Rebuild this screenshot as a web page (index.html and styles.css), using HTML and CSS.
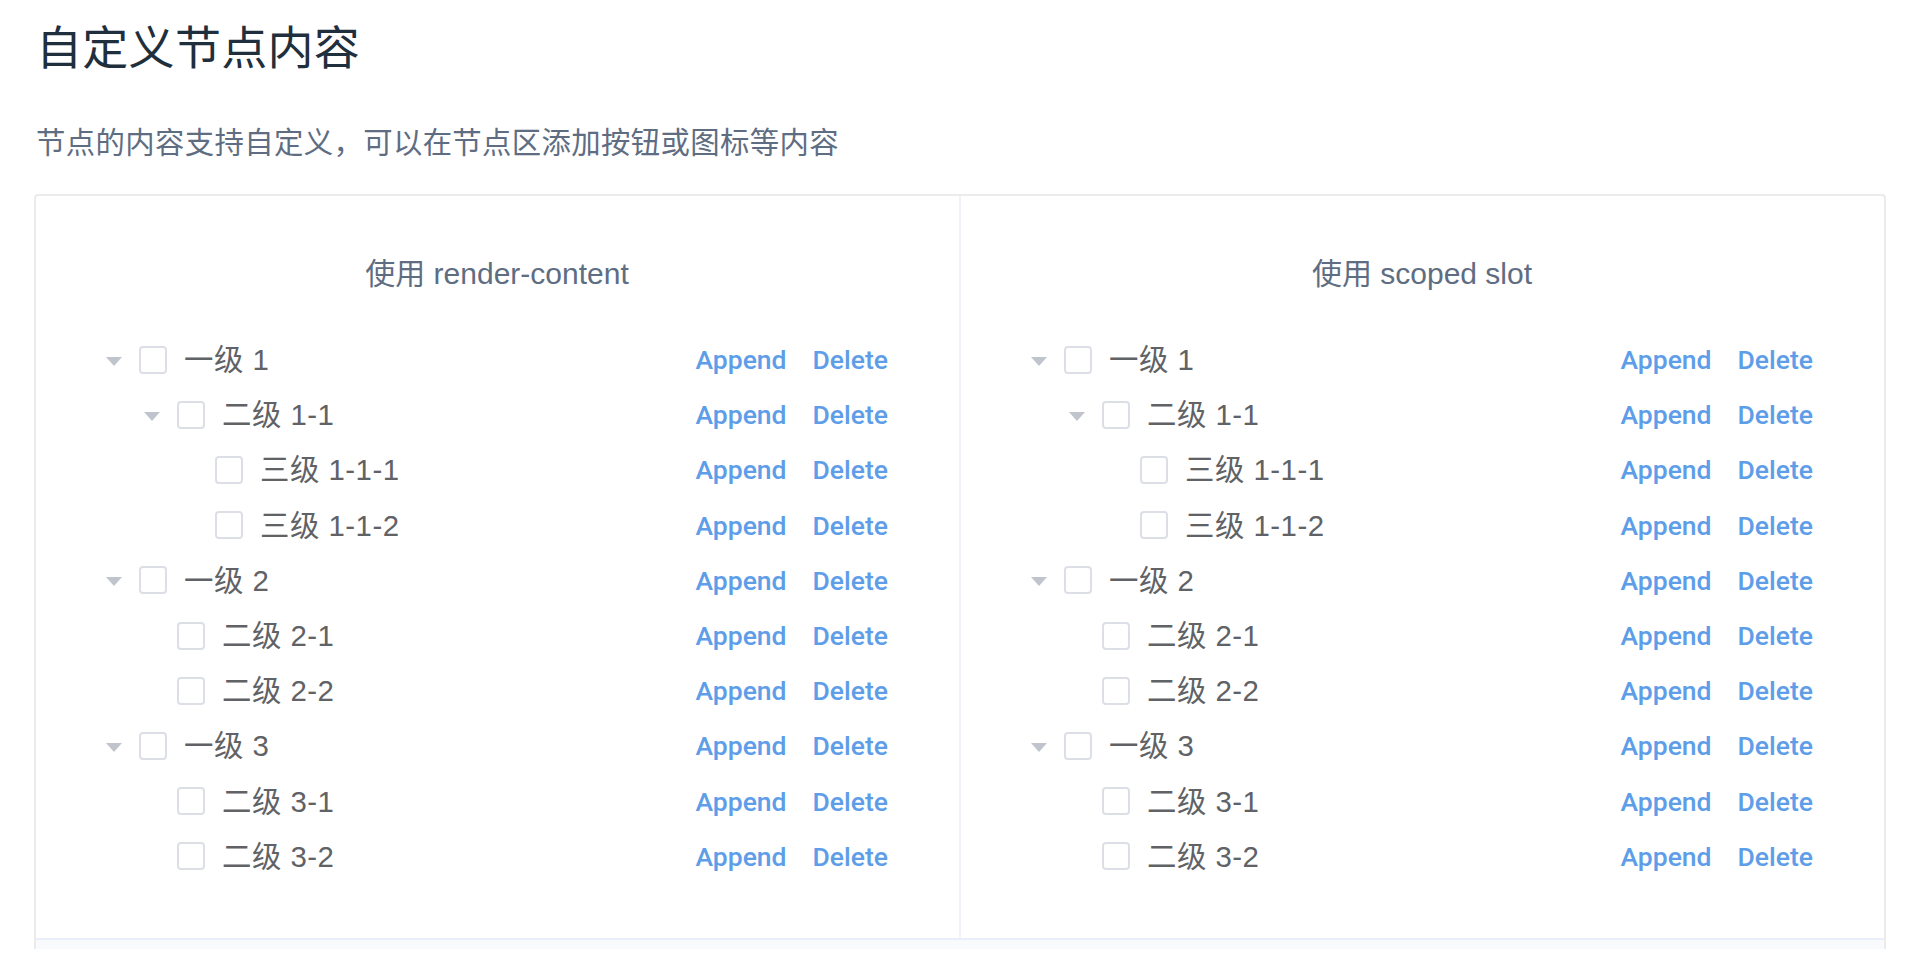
FILE: index.html
```html
<!DOCTYPE html>
<html lang="zh-CN">
<head>
    <meta charset="UTF-8">
    <title>自定义节点内容</title>
    <link rel="stylesheet" href="styles.css">
</head>
<body>
<div class="page">
    <h3 class="title">自定义节点内容</h3>
    <p class="desc">节点的内容支持自定义，可以在节点区添加按钮或图标等内容</p>

    <div class="demo-block">
        <div class="source">
            <div class="block">
                <p class="block-title">使用 render-content</p>
                <div class="tree">
                    <div class="node lv1"><span class="caret"></span><span class="check"></span><span class="label">一级 1</span><span class="ops"><a>Append</a><a>Delete</a></span></div>
                    <div class="node lv2"><span class="caret"></span><span class="check"></span><span class="label">二级 1-1</span><span class="ops"><a>Append</a><a>Delete</a></span></div>
                    <div class="node lv3"><span class="caret leaf"></span><span class="check"></span><span class="label">三级 1-1-1</span><span class="ops"><a>Append</a><a>Delete</a></span></div>
                    <div class="node lv3"><span class="caret leaf"></span><span class="check"></span><span class="label">三级 1-1-2</span><span class="ops"><a>Append</a><a>Delete</a></span></div>
                    <div class="node lv1"><span class="caret"></span><span class="check"></span><span class="label">一级 2</span><span class="ops"><a>Append</a><a>Delete</a></span></div>
                    <div class="node lv2"><span class="caret leaf"></span><span class="check"></span><span class="label">二级 2-1</span><span class="ops"><a>Append</a><a>Delete</a></span></div>
                    <div class="node lv2"><span class="caret leaf"></span><span class="check"></span><span class="label">二级 2-2</span><span class="ops"><a>Append</a><a>Delete</a></span></div>
                    <div class="node lv1"><span class="caret"></span><span class="check"></span><span class="label">一级 3</span><span class="ops"><a>Append</a><a>Delete</a></span></div>
                    <div class="node lv2"><span class="caret leaf"></span><span class="check"></span><span class="label">二级 3-1</span><span class="ops"><a>Append</a><a>Delete</a></span></div>
                    <div class="node lv2"><span class="caret leaf"></span><span class="check"></span><span class="label">二级 3-2</span><span class="ops"><a>Append</a><a>Delete</a></span></div>
                </div>
            </div>
            <div class="block">
                <p class="block-title">使用 scoped slot</p>
                <div class="tree">
                    <div class="node lv1"><span class="caret"></span><span class="check"></span><span class="label">一级 1</span><span class="ops"><a>Append</a><a>Delete</a></span></div>
                    <div class="node lv2"><span class="caret"></span><span class="check"></span><span class="label">二级 1-1</span><span class="ops"><a>Append</a><a>Delete</a></span></div>
                    <div class="node lv3"><span class="caret leaf"></span><span class="check"></span><span class="label">三级 1-1-1</span><span class="ops"><a>Append</a><a>Delete</a></span></div>
                    <div class="node lv3"><span class="caret leaf"></span><span class="check"></span><span class="label">三级 1-1-2</span><span class="ops"><a>Append</a><a>Delete</a></span></div>
                    <div class="node lv1"><span class="caret"></span><span class="check"></span><span class="label">一级 2</span><span class="ops"><a>Append</a><a>Delete</a></span></div>
                    <div class="node lv2"><span class="caret leaf"></span><span class="check"></span><span class="label">二级 2-1</span><span class="ops"><a>Append</a><a>Delete</a></span></div>
                    <div class="node lv2"><span class="caret leaf"></span><span class="check"></span><span class="label">二级 2-2</span><span class="ops"><a>Append</a><a>Delete</a></span></div>
                    <div class="node lv1"><span class="caret"></span><span class="check"></span><span class="label">一级 3</span><span class="ops"><a>Append</a><a>Delete</a></span></div>
                    <div class="node lv2"><span class="caret leaf"></span><span class="check"></span><span class="label">二级 3-1</span><span class="ops"><a>Append</a><a>Delete</a></span></div>
                    <div class="node lv2"><span class="caret leaf"></span><span class="check"></span><span class="label">二级 3-2</span><span class="ops"><a>Append</a><a>Delete</a></span></div>
                </div>
            </div>
        </div>
        <div class="control"></div>
    </div>
</div>
</body>
</html>
```

FILE: styles.css
```css
body,div,p,h3 {
    margin: 0;
    padding: 0;
}

body {
    background: #fff;
    font-family: "Liberation Sans", "Noto Sans CJK SC", sans-serif;
}

.page {
    padding: 25px 32px 0 34px;
}

.title {
    font-size: 46px;
    line-height: 46px;
    font-weight: normal;
    color: #1f2f3d;
    padding-left: 2px;
    letter-spacing: 0.3px;
}

.desc {
    margin: 50px 0 29px;
    padding-left: 2px;
    font-size: 29.4px;
    line-height: 44px;
    letter-spacing: 0.35px;
    color: #5e6d82;
}

.demo-block {
    border: 2px solid #ebebeb;
    border-bottom: 0;
    border-radius: 4px 4px 0 0;
}

.source {
    display: grid;
    grid-template-columns: 925px 1fr;
}

.block {
    padding: 55px 54px 54px 53px;
}

.block:first-child {
    border-right: 2px solid #eff2f6;
}

.block-title {
    text-align: center;
    font-size: 30px;
    line-height: 45px;
    color: #5e6d82;
    margin-bottom: 36px;
}

/* tree rows */
.node {
    display: flex;
    align-items: center;
    height: 55.2px;
}

.lv2 {
    padding-left: 38px;
}

.lv3 {
    padding-left: 76px;
}

.caret {
    width: 50px;
    height: 55px;
    display: flex;
    align-items: center;
    justify-content: center;
    flex-shrink: 0;
}

.caret:after {
    content: "";
    margin-top: 3px;
    border-left: 8px solid transparent;
    border-right: 8px solid transparent;
    border-top: 9px solid #c0c4cc;
}

.caret.leaf:after {
    border-top-color: transparent;
}

.check {
    width: 28px;
    height: 28px;
    box-sizing: border-box;
    border: 2px solid #dcdfe6;
    border-radius: 4px;
    background: #fff;
    margin-right: 17px;
    flex-shrink: 0;
}

.label {
    flex: 1;
    font-size: 29.4px;
    letter-spacing: 0.5px;
    color: #606266;
    line-height: 55px;
}

.ops {
    display: flex;
    gap: 26px;
    padding-right: 17px;
}

.ops a {
    font-family: Roboto, "Liberation Sans", sans-serif;
    font-size: 26.5px;
    font-weight: 500;
    color: #5e9de8;
    cursor: pointer;
}

.control {
    height: 9px;
    border-top: 2px solid #eaeefb;
    background: #f9fafc;
}
```
